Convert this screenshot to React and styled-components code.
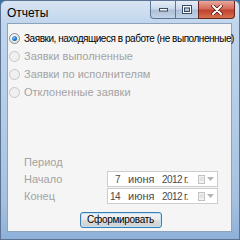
import React from 'react';
import styled, { createGlobalStyle } from 'styled-components';

const GlobalStyle = createGlobalStyle`
  html, body {
    margin: 0;
    padding: 0;
    width: 240px;
    height: 240px;
    overflow: hidden;
    background: #3a6ea5;
  }
  * { box-sizing: border-box; }
`;

const FONT = '"Liberation Sans", Arial, sans-serif';

const Window = styled.div`
  width: 240px;
  height: 240px;
  display: flex;
  flex-direction: column;
  background: linear-gradient(180deg, #d6e4f3 0px, #c1d6ed 22px, #b3cbe6 120px, #a6c1e0 200px, #8db0d9 240px);
  border: 1px solid #5c7393;
  border-radius: 6px 6px 0 0;
  font-family: ${FONT};
  font-size: 11px;
  white-space: nowrap;
`;

const TitleBar = styled.div`
  height: 21px;
  flex: none;
  display: flex;
  align-items: flex-start;
`;

const Title = styled.div`
  padding: 5px 0 0 6px;
  color: #000;
  font-size: 12px;
  flex: 1;
`;

const CaptionButtons = styled.div`
  display: flex;
  margin-right: 4px;
`;

const CaptionButton = styled.div`
  height: 18px;
  width: ${({ $w }) => $w}px;
  border: 1px solid ${({ $close }) => ($close ? '#6b2420' : '#5d7596')};
  border-top: none;
  margin-left: -1px;
  border-radius: ${({ $r }) => $r};
  background: ${({ $close }) =>
    $close
      ? 'linear-gradient(180deg, #e8a89c 0%, #d66b5a 45%, #c1412d 55%, #d4724f 100%)'
      : 'linear-gradient(180deg, #e6eef8 0%, #cbd9ea 45%, #aebfd6 55%, #c3d4e8 100%)'};
  display: flex;
  align-items: center;
  justify-content: center;
`;

const Client = styled.div`
  flex: 1;
  margin: 1px 7px 7px 6px;
  border: 1px solid #8da2bb;
  background: #f5f5f5;
  display: flex;
  flex-direction: column;
  padding: 5px 0 3px 0;
`;

const RadioList = styled.div`
  display: flex;
  flex-direction: column;
`;

const RadioRow = styled.div`
  height: 18px;
  display: flex;
  align-items: center;
  padding-left: 1px;
  color: ${({ $disabled }) => ($disabled ? '#a3a3a3' : '#000')};
  font-size: ${({ $disabled }) => ($disabled ? '11px' : '10px')};
  letter-spacing: ${({ $disabled }) => ($disabled ? '0' : '-0.46px')};
`;

const RadioCircle = styled.span`
  width: 11px;
  height: 11px;
  border-radius: 50%;
  border: 1px solid ${({ $disabled }) => ($disabled ? '#c6c6c6' : '#8a8a8a')};
  background: ${({ $disabled }) =>
    $disabled ? '#f0f0f0' : 'radial-gradient(circle at 40% 35%, #ffffff 0%, #e6e6e6 70%, #d2d2d2 100%)'};
  margin-right: 4px;
  display: flex;
  align-items: center;
  justify-content: center;
  flex: none;
`;

const RadioDot = styled.span`
  width: 5px;
  height: 5px;
  border-radius: 50%;
  background: radial-gradient(circle at 35% 35%, #7fc3f5 0%, #1b6ec0 60%, #0b3f86 100%);
`;

const Spacer = styled.div`
  flex: 1;
`;

const PeriodSection = styled.div`
  display: flex;
  flex-direction: column;
  padding-left: 16px;
  padding-right: 13px;
`;

const PeriodLabel = styled.div`
  color: #a3a3a3;
  height: 16px;
  line-height: 16px;
`;

const DateRow = styled.div`
  display: flex;
  align-items: center;
  justify-content: space-between;
  height: 16px;
  margin-top: 1px;
`;

const DateLabel = styled.div`
  color: #a3a3a3;
`;

const DateBox = styled.div`
  width: 111px;
  height: 16px;
  border: 1px solid #cdcdcd;
  background: #fff;
  display: flex;
  align-items: center;
  color: #4b4b4b;
  padding-left: 1px;
`;

const DatePart = styled.span`
  width: ${({ $w }) => $w}px;
  padding-left: ${({ $pl }) => $pl || 0}px;
  font-size: ${({ $tight }) => ($tight ? '10px' : '11px')};
  letter-spacing: ${({ $tight }) => ($tight ? '-0.6px' : '0')};
  flex: none;
`;

const PickerIcons = styled.span`
  display: flex;
  align-items: center;
  gap: 2px;
  margin-left: 1px;
`;

const ButtonRow = styled.div`
  display: flex;
  justify-content: center;
  margin-top: 8px;
  padding-left: 2px;
`;

const Button = styled.button`
  width: 82px;
  height: 16px;
  padding: 0;
  border: 1px solid #3c7fb1;
  border-radius: 3px;
  background: linear-gradient(180deg, #f4f4f4 0%, #ebebeb 48%, #dddddd 52%, #cfcfcf 100%);
  box-shadow: inset 0 0 0 1px #bfe3f7;
  font-family: ${FONT};
  font-size: 10px;
  letter-spacing: -0.3px;
  color: #000;
  line-height: 14px;
`;

const CalendarIcon = () => (
  <svg width="7" height="9" viewBox="0 0 7 9">
    <rect x="0.5" y="0.5" width="6" height="8" fill="#f4f4f4" stroke="#c2c2c2" />
    <line x1="1.5" y1="3" x2="5.5" y2="3" stroke="#d0d0d0" />
    <line x1="1.5" y1="5" x2="5.5" y2="5" stroke="#d0d0d0" />
  </svg>
);

const Arrow = () => (
  <svg width="7" height="4" viewBox="0 0 7 4">
    <path d="M0 0 L7 0 L3.5 4 Z" fill="#b5b5b5" />
  </svg>
);

const DatePicker = ({ day, dayPad }) => (
  <DateBox>
    <DatePart $w={19} $pl={dayPad} $tight>{day}</DatePart>
    <DatePart $w={34}>июня</DatePart>
    <DatePart $w={35} $tight>2012 г.</DatePart>
    <PickerIcons>
      <CalendarIcon />
      <Arrow />
    </PickerIcons>
  </DateBox>
);

const radios = [
  { label: 'Заявки, находящиеся в работе (не выполненные)', checked: true },
  { label: 'Заявки выполненные', disabled: true },
  { label: 'Заявки по исполнителям', disabled: true },
  { label: 'Отклоненные заявки', disabled: true },
];

const App = () => (
  <>
    <GlobalStyle />
    <Window>
      <TitleBar>
        <Title>Отчеты</Title>
        <CaptionButtons>
          <CaptionButton $w={26} $r="0 0 0 4px">
            <svg width="9" height="4" viewBox="0 0 9 4">
              <rect x="0.5" y="0.5" width="8" height="2.5" fill="#fff" stroke="#3b4b63" strokeWidth="1" />
            </svg>
          </CaptionButton>
          <CaptionButton $w={24} $r="0">
            <svg width="10" height="9" viewBox="0 0 10 9">
              <rect x="0.5" y="0.5" width="9" height="8" fill="none" stroke="#3b4b63" />
              <rect x="1.5" y="1.5" width="7" height="6" fill="none" stroke="#fff" />
              <rect x="2.5" y="3" width="5" height="3.5" fill="none" stroke="#3b4b63" />
            </svg>
          </CaptionButton>
          <CaptionButton $w={37} $r="0 0 4px 0" $close>
            <svg width="12" height="10" viewBox="0 0 12 10">
              <path d="M2 1 L10 9 M10 1 L2 9" stroke="#5a1a14" strokeWidth="3.6" strokeLinecap="round" />
              <path d="M2 1 L10 9 M10 1 L2 9" stroke="#ffffff" strokeWidth="2" strokeLinecap="round" />
            </svg>
          </CaptionButton>
        </CaptionButtons>
      </TitleBar>
      <Client>
        <RadioList>
          {radios.map((r) => (
            <RadioRow key={r.label} $disabled={r.disabled}>
              <RadioCircle $disabled={r.disabled}>{r.checked && <RadioDot />}</RadioCircle>
              {r.label}
            </RadioRow>
          ))}
        </RadioList>
        <Spacer />
        <PeriodSection>
          <PeriodLabel>Период</PeriodLabel>
          <DateRow>
            <DateLabel>Начало</DateLabel>
            <DatePicker day="7" dayPad={6} />
          </DateRow>
          <DateRow>
            <DateLabel>Конец</DateLabel>
            <DatePicker day="14" dayPad={1} />
          </DateRow>
        </PeriodSection>
        <ButtonRow>
          <Button>Сформировать</Button>
        </ButtonRow>
      </Client>
    </Window>
  </>
);

export default App;
